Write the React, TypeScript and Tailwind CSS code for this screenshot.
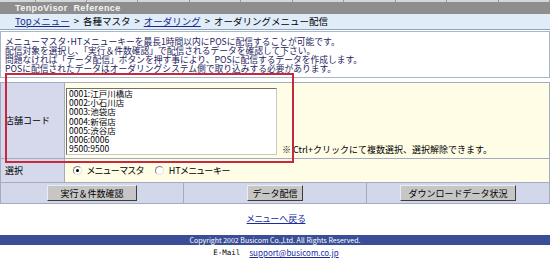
const stores = [
  '0001:江戸川橋店',
  '0002:小石川店',
  '0003:池袋店',
  '0004:新宿店',
  '0005:渋谷店',
  '0006:0006',
  '9500:9500',
];

const messages = [
  'メニューマスタ･HTメニューキーを最長1時間以内にPOSに配信することが可能です。',
  '配信対象を選択し、「実行＆件数確認」で配信されるデータを確認して下さい。',
  '問題なければ「データ配信」ボタンを押す事により、POSに配信するデータを作成します。',
  'POSに配信されたデータはオーダリングシステム側で取り込みする必要があります。',
];

const buttons = [
  { label: '実行＆件数確認', width: 'w-[90px]' },
  { label: 'データ配信', width: 'w-[56px]' },
  { label: 'ダウンロードデータ状況', width: 'w-[116px]' },
];

function Radio({ checked }: { checked?: boolean }) {
  return (
    <span className="w-[9px] h-[9px] rounded-full bg-white border border-t-[#808080] border-l-[#808080] border-r-[#e0e0e0] border-b-[#e0e0e0] flex items-center justify-center">
      {checked && <span className="w-[3px] h-[3px] rounded-full bg-black" />}
    </span>
  );
}

export default function App() {
  return (
    <div className="relative w-[550px] h-[271px] bg-white overflow-hidden font-['Noto_Sans_CJK_JP',sans-serif] text-[9px] text-black">
      {/* top strip */}
      <div className="h-[2px] bg-[#d6d6d6] flex">
        <div className="w-[36px] border-r border-[#9a9a9a]" />
        {Array.from({ length: 10 }).map((_, i) => (
          <div key={i} className="w-[52px] border-r border-[#9a9a9a]" />
        ))}
      </div>

      {/* title */}
      <div className="h-[12px] bg-[#8e8e8e] flex items-center pl-[15px]">
        <span className="font-['Liberation_Sans',sans-serif] font-bold text-[9px] tracking-[0.4px] text-[#f4f4f4] leading-none">
          TenpoVisor&nbsp; Reference
        </span>
      </div>

      {/* breadcrumb */}
      <div className="h-[16px] bg-[#e0ecf8] border-b border-[#8fa3bd] flex items-center pl-[15px] text-[9.5px] leading-none">
        <a className="text-[#1a2a8c] underline">Topメニュー</a>
        <span className="mx-[4px]">&gt;</span>
        <span>各種マスタ</span>
        <span className="mx-[4px]">&gt;</span>
        <a className="text-[#1a2a8c] underline">オーダリング</a>
        <span className="mx-[4px]">&gt;</span>
        <span>オーダリングメニュー配信</span>
      </div>

      {/* message */}
      <div className="mt-[1px] h-[47px] border border-[#a8b6ca] pl-[4px] pt-[5px] leading-[9px] text-[8.75px] text-[#1c1c5c]">
        {messages.map((m) => (
          <div key={m} className="whitespace-nowrap">{m}</div>
        ))}
      </div>

      {/* form */}
      <div className="mt-[4px] bg-[#a2abc2] p-px flex flex-col gap-px">
        <div className="flex gap-px h-[75px]">
          <div className="w-[63px] bg-[#d6d9ec] flex items-center pl-[4px]">店舗コード</div>
          <div className="flex-1 bg-[#fffde6] flex items-end pl-px pt-[5px] pb-[3px]">
            <div className="w-[211px] h-[67px] bg-white border border-t-[#707070] border-l-[#707070] border-r-[#c8c8c8] border-b-[#c8c8c8] pl-[2px] leading-[9.2px] text-[8.5px]">
              {stores.map((s) => (
                <div key={s}>{s}</div>
              ))}
            </div>
            <div className="ml-[5px] pb-[1px] leading-[9px] whitespace-nowrap">
              ※ Ctrl+クリックにて複数選択、選択解除できます。
            </div>
          </div>
        </div>

        <div className="flex gap-px h-[23px]">
          <div className="w-[63px] bg-[#d6d9ec] flex items-center pl-[4px]">選択</div>
          <div className="flex-1 bg-[#fffde6] flex items-center pl-[8px]">
            <label className="flex items-center gap-[5px]">
              <Radio checked />
              <span className="[font-feature-settings:'palt']">メニューマスタ</span>
            </label>
            <label className="flex items-center gap-[5px] ml-[11px]">
              <Radio />
              <span className="[font-feature-settings:'palt']">HTメニューキー</span>
            </label>
          </div>
        </div>

        <div className="grid grid-cols-3 gap-px h-[20px]">
          {buttons.map((b) => (
            <div key={b.label} className="bg-[#d3d7ea] flex items-center justify-center">
              <button
                className={`${b.width} h-[16px] bg-[#c6c6c6] border border-t-[#ececec] border-l-[#ececec] border-r-[#3c3c3c] border-b-[#3c3c3c] text-[9px] leading-none flex items-center justify-center`}
              >
                {b.label}
              </button>
            </div>
          ))}
        </div>
      </div>

      {/* back link */}
      <div className="mt-[10px] flex justify-center pl-[2px]">
        <a className="text-[#1a2aa0] underline text-[9px] leading-[10px] [font-feature-settings:'palt']">メニューへ戻る</a>
      </div>

      {/* footer */}
      <div className="mt-[11px] h-[10px] bg-[#3a4d98] flex items-center justify-center">
        <span className="text-white text-[7px] leading-none">Copyright 2002 Busicom Co.,Ltd. All Rights Reserved.</span>
      </div>
      <div className="mt-[2px] flex items-center justify-center pl-[2px] leading-[12px]">
        <span className="font-['DejaVu_Sans_Mono',monospace] text-[7.5px]">E-Mail</span>
        <a className="ml-[9px] text-[#1a2aa0] underline text-[8px]">support@busicom.co.jp</a>
      </div>

      {/* red annotation box */}
      <div className="absolute left-[5px] top-[73px] w-[289px] h-[90px] border-2 border-[#c8283c] pointer-events-none" />
    </div>
  );
}
